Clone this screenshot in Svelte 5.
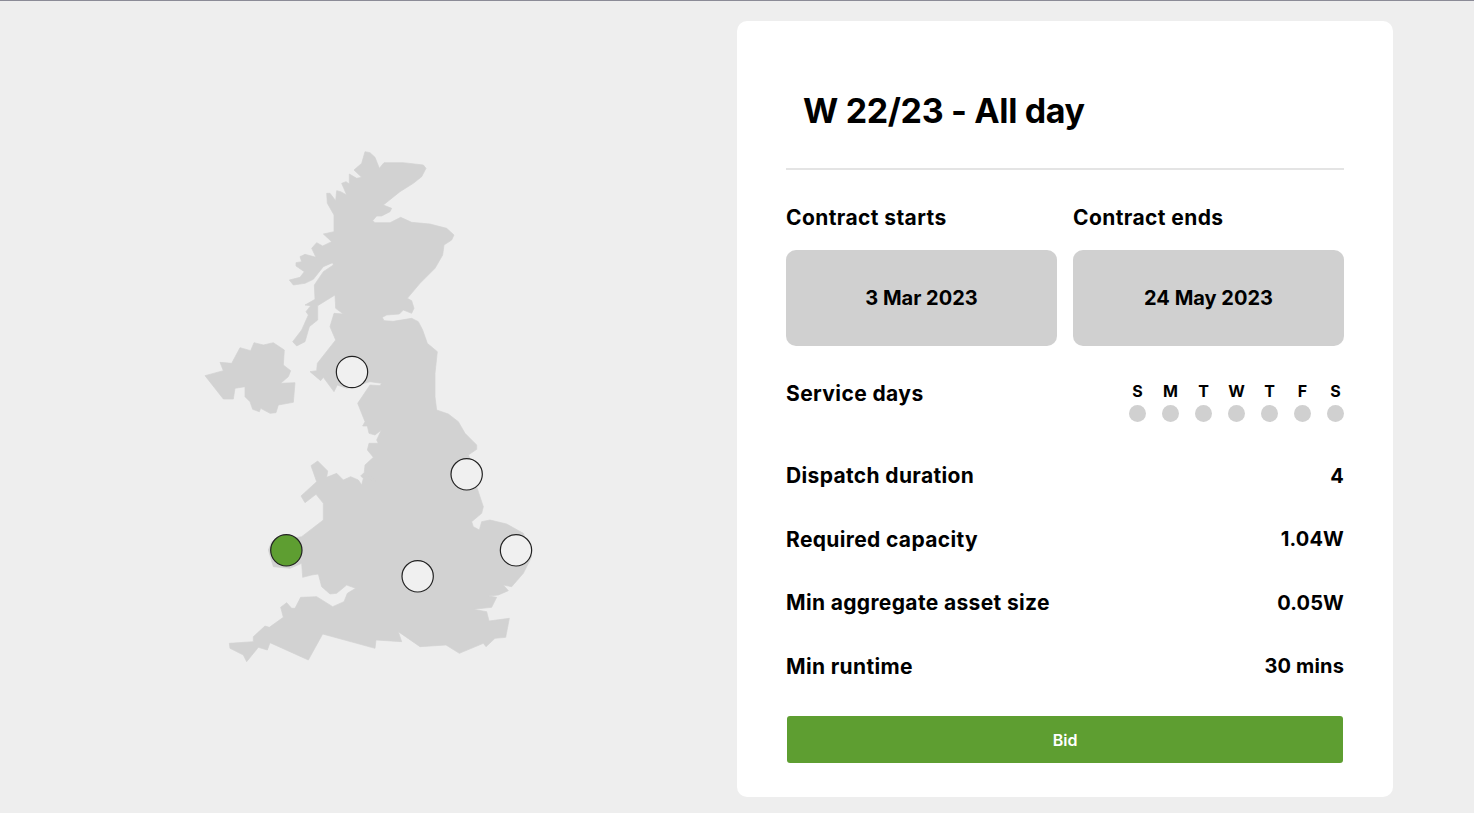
<script>
  // Outline traced in 3x reference units; the south half is offset by 780.
  const north = [[525,35],[540,38],[555,52],[568,85],[582,68],[640,68],[700,75],[708,85],[695,110],[670,130],[630,155],[580,195],[605,205],[600,215],[575,228],[560,228],[548,242],[555,248],[600,248],[632,232],[665,247],[720,252],[770,265],[792,285],[785,300],[762,315],[758,345],[735,385],[690,430],[652,475],[665,482],[672,505],[665,520],[640,510],[628,522],[590,525],[577,532],[582,542],[610,544],[665,535],[685,545],[698,570],[712,610],[742,635],[735,700],[735,770]];
  const south = [[740,30],[775,42],[805,65],[825,100],[860,135],[860,148],[835,165],[850,200],[860,260],[880,320],[875,340],[845,365],[850,380],[868,390],[875,365],[900,360],[950,372],[1000,400],[1025,470],[1000,520],[965,560],[940,555],[955,572],[925,585],[895,588],[920,592],[905,622],[850,628],[890,635],[897,663],[958,655],[947,712],[915,715],[888,740],[880,730],[808,760],[768,735],[690,740],[625,695],[635,725],[558,720],[555,745],[398,702],[355,780],[240,728],[232,750],[205,742],[170,785],[160,765],[120,745],[118,730],[190,725],[190,710],[225,678],[238,682],[280,652],[272,622],[290,608],[305,625],[315,625],[332,592],[380,590],[428,620],[462,605],[472,580],[497,565],[470,555],[440,580],[420,582],[395,560],[385,522],[365,525],[338,532],[335,490],[300,505],[250,500],[235,450],[245,425],[335,410],[400,360],[400,310],[378,283],[345,308],[333,288],[380,245],[363,197],[383,183],[413,213],[410,232],[440,220],[460,240],[482,230],[505,240],[515,255],[520,235],[512,228],[525,215],[558,243],[550,250],[523,215],[525,195],[550,172],[532,150],[537,130],[565,130],[560,120],[574,90],[555,105],[537,100],[532,78],[518,78],[525,65],[503,10]];
  const west = [[540,735],[570,737],[575,730],[540,725],[470,745],[442,735],[432,755],[400,712],[392,722],[360,695],[380,692],[382,670],[437,600],[420,560],[432,520],[460,522],[437,505],[435,465],[383,497],[383,540],[358,560],[345,605],[320,618],[308,605],[335,570],[355,525],[348,515],[362,497],[345,495],[375,478],[373,435],[400,395],[430,375],[428,368],[400,380],[370,418],[345,430],[310,435],[298,420],[330,412],[343,395],[318,378],[318,368],[335,365],[330,350],[345,343],[378,352],[365,325],[380,308],[398,318],[425,305],[400,282],[432,275],[432,225],[412,190],[410,160],[420,160],[437,182],[440,152],[452,155],[470,165],[455,130],[468,125],[478,132],[478,102],[500,115],[515,112],[492,90],[515,70]];
  const ireland = [[45,707],[100,692],[90,667],[125,670],[150,623],[182,632],[192,608],[220,615],[250,608],[283,630],[280,675],[302,692],[295,710],[272,730],[315,728],[310,787],[265,795],[258,818],[240,820],[212,805],[208,815],[188,808],[180,785],[165,770],[165,740],[135,745],[130,777],[100,777]];

  const toPath = (pts) => 'M' + pts.map((p) => p.join(' ')).join('L') + 'Z';
  const mainland = toPath([...north, ...south.map(([x, y]) => [x, y + 780]), ...west]);
  const islandPath = toPath(ireland);

  const pins = [
    { x: 486, y: 696 },
    { x: 830, y: 1003 },
    { x: 978, y: 1231 },
    { x: 683, y: 1309 },
    { x: 289, y: 1231, active: true }
  ];

  const days = ['S', 'M', 'T', 'W', 'T', 'F', 'S'];
  const stats = [
    ['Dispatch duration', '4'],
    ['Required capacity', '1.04W'],
    ['Min aggregate asset size', '0.05W'],
    ['Min runtime', '30 mins']
  ];
</script>

<div class="page">
  <div class="map-pane">
    <svg class="map" viewBox="0 0 1080 1590" aria-label="Map of the UK">
      <path class="land" d={mainland} />
      <path class="land" d={islandPath} />
      {#each pins as pin}
        <circle class="pin" class:active={pin.active} cx={pin.x} cy={pin.y} r="47" />
      {/each}
    </svg>
  </div>

  <section class="card">
    <header class="head">
      <h1>W 22/23 - All day</h1>
    </header>

    <div class="dates">
      <div class="date">
        <h2>Contract starts</h2>
        <div class="box">3 Mar 2023</div>
      </div>
      <div class="date">
        <h2>Contract ends</h2>
        <div class="box">24 May 2023</div>
      </div>
    </div>

    <div class="service">
      <h2>Service days</h2>
      <ul class="days">
        {#each days as day}
          <li><span>{day}</span><i></i></li>
        {/each}
      </ul>
    </div>

    <dl class="stats">
      {#each stats as [label, value]}
        <div class="stat">
          <dt>{label}</dt>
          <dd>{value}</dd>
        </div>
      {/each}
    </dl>

    <button class="bid">Bid</button>
  </section>
</div>

<style>
  :global(body) {
    margin: 0;
    background: #eeeeee;
  }

  .page {
    box-sizing: border-box;
    display: flex;
    height: 813px;
    overflow: hidden;
    border-top: 1px solid #8b8b97;
    background: #eeeeee;
    color: #000;
    font-family: Inter, "Liberation Sans", sans-serif;
    font-weight: 700;
  }

  .map-pane {
    box-sizing: border-box;
    flex: 0 0 737px;
    padding: 139px 0 0 190px;
  }

  .map {
    display: block;
    width: 360px;
    height: 530px;
  }

  .land {
    fill: #d2d2d2;
    stroke: #d2d2d2;
    stroke-width: 2;
    stroke-linejoin: round;
  }

  .pin {
    fill: #f0f0f0;
    stroke: #222;
    stroke-width: 3.6;
  }

  .pin.active {
    fill: #5e9e31;
  }

  .card {
    box-sizing: border-box;
    flex: 0 0 656px;
    height: 776px;
    margin-top: 20px;
    padding: 0 49px;
    background: #fff;
    border-radius: 10px;
  }

  .head {
    box-sizing: border-box;
    height: 149px;
    padding: 69px 0 0 17px;
    border-bottom: 2px solid #e4e4e4;
  }

  h1 {
    margin: 0;
    font-size: 34px;
    line-height: 42px;
    font-weight: 700;
    letter-spacing: -0.35px;
  }

  h2 {
    margin: 0;
    font-size: 21px;
    line-height: 30px;
    font-weight: 700;
    letter-spacing: 0.4px;
  }

  .dates {
    display: grid;
    grid-template-columns: 1fr 1fr;
    gap: 16px;
    padding-top: 33px;
  }

  .box {
    display: flex;
    align-items: center;
    justify-content: center;
    height: 96px;
    margin-top: 17px;
    background: #d0d0d0;
    border-radius: 10px;
    font-size: 20px;
  }

  .service {
    display: flex;
    justify-content: space-between;
    padding-top: 34px;
    height: 51px;
  }

  .service h2 {
    margin-top: -1px;
  }

  .days {
    display: flex;
    gap: 16px;
    margin: 0;
    padding: 0;
    list-style: none;
  }

  .days li {
    display: flex;
    flex-direction: column;
    align-items: center;
    width: 17px;
  }

  .days span {
    font-size: 16px;
    line-height: 22px;
  }

  .days i {
    width: 17px;
    height: 17px;
    margin-top: 3px;
    border-radius: 50%;
    background: #d0d0d0;
  }

  .stats {
    margin: 0;
    padding-top: 13px;
  }

  .stat {
    display: flex;
    justify-content: space-between;
    align-items: center;
    height: 63.5px;
    font-size: 21px;
    letter-spacing: 0.35px;
  }

  dd {
    margin: 0;
    font-size: 20px;
    letter-spacing: 0.15px;
  }

  .bid {
    display: block;
    width: 556px;
    height: 47px;
    margin: 18px 1px 0;
    padding: 0;
    border: 0;
    border-radius: 3px;
    background: #5e9e31;
    color: #fff;
    font: 600 16px Inter, "Liberation Sans", sans-serif;
  }
</style>
